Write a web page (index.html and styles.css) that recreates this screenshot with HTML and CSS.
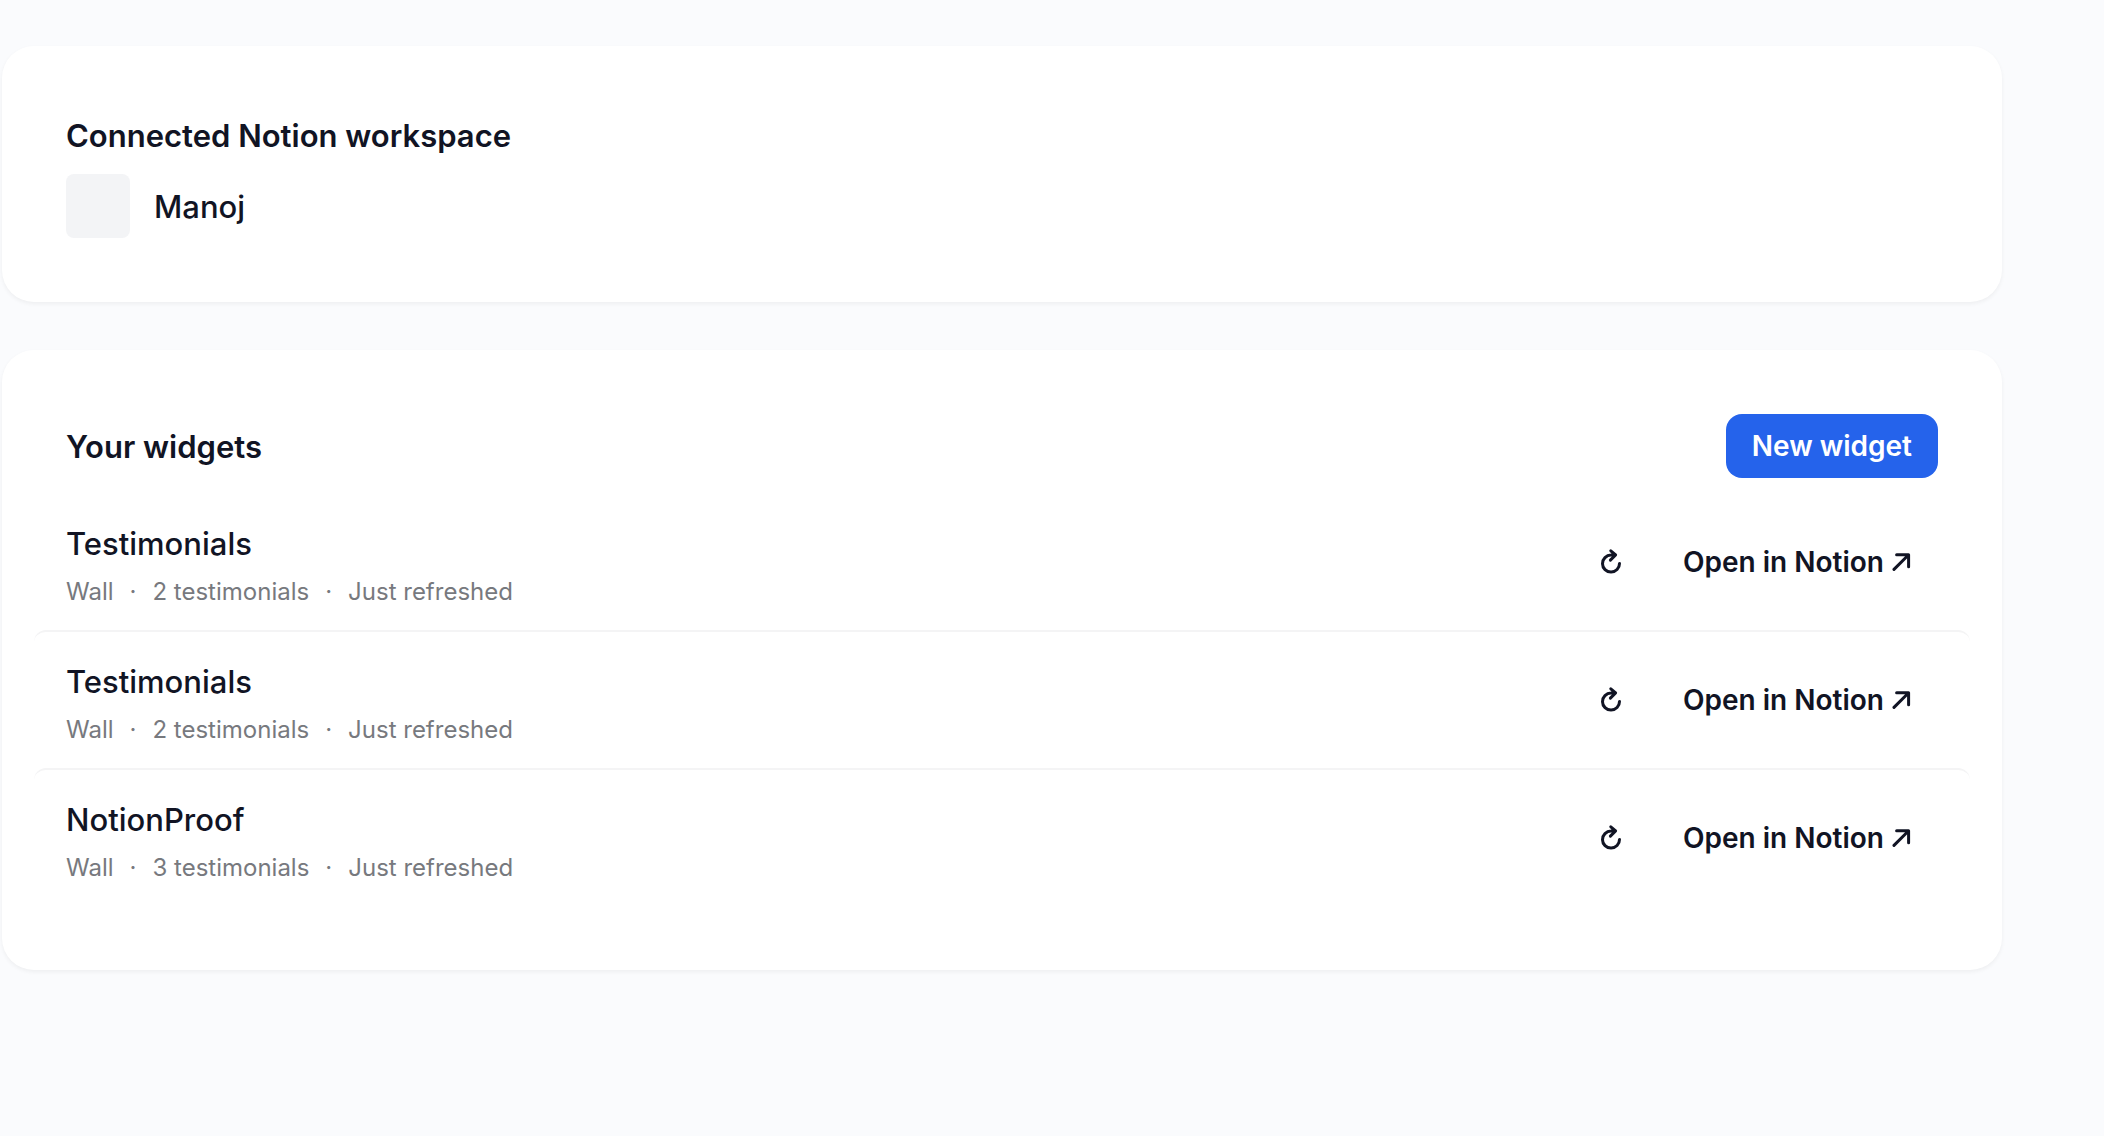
FILE: index.html
```html
<!DOCTYPE html>
<html lang="en">
<head>
  <meta charset="UTF-8">
  <title>NotionProof</title>
  <link rel="stylesheet" href="styles.css">
</head>
<body>

  <!-- Shared icons -->
  <svg class="icon-defs" aria-hidden="true">
    <symbol id="icon-refresh" viewBox="0 0 24 28">
      <path d="M20.5 15.5a8.5 8.5 0 1 1-8.5-8.4l4.6-.2M11.8 2.8l4.8 4.1-5.2 5.2"/>
    </symbol>
    <symbol id="icon-arrow" viewBox="0 0 20 20">
      <path d="M2 17.4L16.4 3M4.6 2.8h12v12"/>
    </symbol>
  </svg>

  <main class="page">
    <section class="card">
      <h2>Connected Notion workspace</h2>
      <div class="workspace">
        <div class="workspace-icon"></div>
        <span>Manoj</span>
      </div>
    </section>

    <section class="card">
      <div class="card-header">
        <h2>Your widgets</h2>
        <button type="button" class="btn primary-btn">New widget</button>
      </div>

      <ul class="widgets">
        <li class="widget">
          <div class="widget-info">
            <h3>Testimonials</h3>
            <p class="meta"><span>Wall</span><span>·</span><span>2 testimonials</span><span>·</span><span>Just refreshed</span></p>
          </div>
          <div class="actions">
            <button type="button" class="btn icon-btn" aria-label="Refresh"><svg class="refresh"><use href="#icon-refresh"/></svg></button>
            <a href="#" class="btn">Open in Notion <svg class="arrow"><use href="#icon-arrow"/></svg></a>
          </div>
        </li>
        <li class="widget">
          <div class="widget-info">
            <h3>Testimonials</h3>
            <p class="meta"><span>Wall</span><span>·</span><span>2 testimonials</span><span>·</span><span>Just refreshed</span></p>
          </div>
          <div class="actions">
            <button type="button" class="btn icon-btn" aria-label="Refresh"><svg class="refresh"><use href="#icon-refresh"/></svg></button>
            <a href="#" class="btn">Open in Notion <svg class="arrow"><use href="#icon-arrow"/></svg></a>
          </div>
        </li>
        <li class="widget">
          <div class="widget-info">
            <h3>NotionProof</h3>
            <p class="meta"><span>Wall</span><span>·</span><span>3 testimonials</span><span>·</span><span>Just refreshed</span></p>
          </div>
          <div class="actions">
            <button type="button" class="btn icon-btn" aria-label="Refresh"><svg class="refresh"><use href="#icon-refresh"/></svg></button>
            <a href="#" class="btn">Open in Notion <svg class="arrow"><use href="#icon-arrow"/></svg></a>
          </div>
        </li>
      </ul>
    </section>
  </main>

</body>
</html>
```
FILE: styles.css
```css
* {
  box-sizing: border-box;
}

body {
  margin: 0;
  background-color: #fafbfd;
  color: #111424;
  font-family: Inter, sans-serif;
  font-size: 31px;
  line-height: 48px;
}

h2,
h3,
p,
ul {
  margin: 0;
  padding: 0;
}

h2 {
  padding-top: 2px;
  font-size: 31px;
  font-weight: 600;
}

h3 {
  font-size: 31px;
  font-weight: 500;
}

.icon-defs {
  display: none;
}

.page {
  display: flex;
  flex-direction: column;
  gap: 48px;
  padding: 46px 102px 46px 2px;
}

.card {
  padding: 64px;
  background-color: white;
  border-radius: 32px;
  box-shadow: 0 2px 4px rgba(0, 0, 0, 0.05);
}

/* Workspace */
.workspace {
  display: flex;
  align-items: center;
  gap: 24px;
  margin-top: 14px;
  font-weight: 500;
}

.workspace span {
  padding-top: 2px;
}

.workspace-icon {
  width: 64px;
  height: 64px;
  border-radius: 8px;
  background-color: #f3f4f6;
}

/* Widgets */
.card-header {
  display: flex;
  justify-content: space-between;
  align-items: center;
}

.widgets {
  margin: 16px -32px 0;
  list-style: none;
}

.widget {
  display: flex;
  justify-content: space-between;
  align-items: center;
  padding: 18px 32px;
  border-radius: 12px;
}

.widget + .widget {
  border-top: 2px solid #f4f4f5;
}

.widget-info {
  padding-top: 8px;
}

.meta {
  display: flex;
  gap: 16px;
  margin-top: 4px;
  color: #77797e;
  font-size: 24px;
  line-height: 40px;
}

.actions {
  display: flex;
  gap: 14px;
}

.btn {
  display: flex;
  align-items: center;
  justify-content: center;
  gap: 8px;
  height: 64px;
  padding: 0 26px;
  border: none;
  border-radius: 16px;
  background: none;
  color: inherit;
  font-family: inherit;
  font-size: 28px;
  font-weight: 600;
  text-decoration: none;
  cursor: pointer;
}

.primary-btn {
  background-color: #2563eb;
  color: white;
}

.icon-btn {
  width: 64px;
  padding: 0;
}

.refresh,
.arrow {
  fill: none;
  stroke: currentColor;
  stroke-width: 3;
  stroke-linecap: round;
  stroke-linejoin: round;
}

.refresh {
  width: 24px;
  height: 28px;
}

.arrow {
  width: 20px;
  height: 20px;
}
```
